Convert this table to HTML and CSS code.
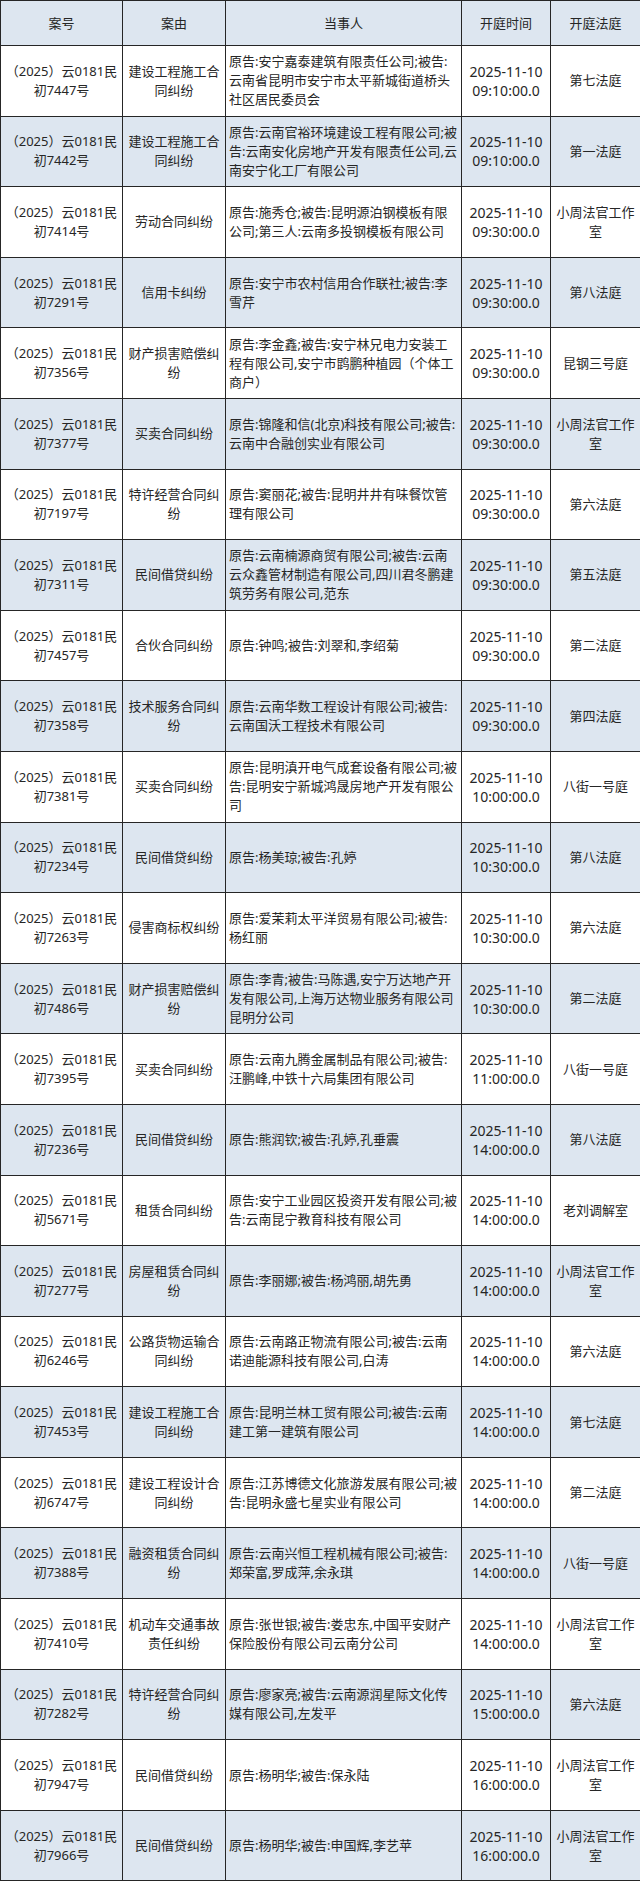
FILE: index.html
```html
<!DOCTYPE html>
<html lang="zh-CN">
<head>
<meta charset="utf-8">
<title>开庭公告</title>
<link rel="stylesheet" href="styles.css">
</head>
<body>
<table class="schedule">
  <colgroup>
    <col class="c-no"><col class="c-cause"><col class="c-party"><col class="c-time"><col class="c-room">
  </colgroup>
  <thead>
    <tr><th>案号</th><th>案由</th><th>当事人</th><th>开庭时间</th><th>开庭法庭</th></tr>
  </thead>
  <tbody>
    <tr><td>（2025）云0181民初7447号</td><td>建设工程施工合同纠纷</td><td class="party">原告:安宁嘉泰建筑有限责任公司;被告:<br>云南省昆明市安宁市太平新城街道桥头<br>社区居民委员会</td><td class="time">2025-11-10 09:10:00.0</td><td>第七法庭</td></tr>
    <tr><td>（2025）云0181民初7442号</td><td>建设工程施工合同纠纷</td><td class="party">原告:云南官裕环境建设工程有限公司;被<br>告:云南安化房地产开发有限责任公司,云<br>南安宁化工厂有限公司</td><td class="time">2025-11-10 09:10:00.0</td><td>第一法庭</td></tr>
    <tr><td>（2025）云0181民初7414号</td><td>劳动合同纠纷</td><td class="party">原告:施秀仓;被告:昆明源泊钢模板有限<br>公司;第三人:云南多投钢模板有限公司</td><td class="time">2025-11-10 09:30:00.0</td><td>小周法官工作室</td></tr>
    <tr><td>（2025）云0181民初7291号</td><td>信用卡纠纷</td><td class="party">原告:安宁市农村信用合作联社;被告:李<br>雪芹</td><td class="time">2025-11-10 09:30:00.0</td><td>第八法庭</td></tr>
    <tr><td>（2025）云0181民初7356号</td><td>财产损害赔偿纠纷</td><td class="party">原告:李金鑫;被告:安宁林兄电力安装工<br>程有限公司,安宁市鹍鹏种植园（个体工<br>商户）</td><td class="time">2025-11-10 09:30:00.0</td><td>昆钢三号庭</td></tr>
    <tr><td>（2025）云0181民初7377号</td><td>买卖合同纠纷</td><td class="party">原告:锦隆和信(北京)科技有限公司;被告:<br>云南中合融创实业有限公司</td><td class="time">2025-11-10 09:30:00.0</td><td>小周法官工作室</td></tr>
    <tr><td>（2025）云0181民初7197号</td><td>特许经营合同纠纷</td><td class="party">原告:窦丽花;被告:昆明井井有味餐饮管<br>理有限公司</td><td class="time">2025-11-10 09:30:00.0</td><td>第六法庭</td></tr>
    <tr><td>（2025）云0181民初7311号</td><td>民间借贷纠纷</td><td class="party">原告:云南楠源商贸有限公司;被告:云南<br>云众鑫管材制造有限公司,四川君冬鹏建<br>筑劳务有限公司,范东</td><td class="time">2025-11-10 09:30:00.0</td><td>第五法庭</td></tr>
    <tr><td>（2025）云0181民初7457号</td><td>合伙合同纠纷</td><td class="party">原告:钟鸣;被告:刘翠和,李绍菊</td><td class="time">2025-11-10 09:30:00.0</td><td>第二法庭</td></tr>
    <tr><td>（2025）云0181民初7358号</td><td>技术服务合同纠纷</td><td class="party">原告:云南华数工程设计有限公司;被告:<br>云南国沃工程技术有限公司</td><td class="time">2025-11-10 09:30:00.0</td><td>第四法庭</td></tr>
    <tr><td>（2025）云0181民初7381号</td><td>买卖合同纠纷</td><td class="party">原告:昆明滇开电气成套设备有限公司;被<br>告:昆明安宁新城鸿晟房地产开发有限公<br>司</td><td class="time">2025-11-10 10:00:00.0</td><td>八街一号庭</td></tr>
    <tr><td>（2025）云0181民初7234号</td><td>民间借贷纠纷</td><td class="party">原告:杨美琼;被告:孔婷</td><td class="time">2025-11-10 10:30:00.0</td><td>第八法庭</td></tr>
    <tr><td>（2025）云0181民初7263号</td><td>侵害商标权纠纷</td><td class="party">原告:爱茉莉太平洋贸易有限公司;被告:<br>杨红丽</td><td class="time">2025-11-10 10:30:00.0</td><td>第六法庭</td></tr>
    <tr><td>（2025）云0181民初7486号</td><td>财产损害赔偿纠纷</td><td class="party">原告:李青;被告:马陈遇,安宁万达地产开<br>发有限公司,上海万达物业服务有限公司<br>昆明分公司</td><td class="time">2025-11-10 10:30:00.0</td><td>第二法庭</td></tr>
    <tr><td>（2025）云0181民初7395号</td><td>买卖合同纠纷</td><td class="party">原告:云南九腾金属制品有限公司;被告:<br>汪鹏峰,中铁十六局集团有限公司</td><td class="time">2025-11-10 11:00:00.0</td><td>八街一号庭</td></tr>
    <tr><td>（2025）云0181民初7236号</td><td>民间借贷纠纷</td><td class="party">原告:熊润钦;被告:孔婷,孔垂震</td><td class="time">2025-11-10 14:00:00.0</td><td>第八法庭</td></tr>
    <tr><td>（2025）云0181民初5671号</td><td>租赁合同纠纷</td><td class="party">原告:安宁工业园区投资开发有限公司;被<br>告:云南昆宁教育科技有限公司</td><td class="time">2025-11-10 14:00:00.0</td><td>老刘调解室</td></tr>
    <tr><td>（2025）云0181民初7277号</td><td>房屋租赁合同纠纷</td><td class="party">原告:李丽娜;被告:杨鸿丽,胡先勇</td><td class="time">2025-11-10 14:00:00.0</td><td>小周法官工作室</td></tr>
    <tr><td>（2025）云0181民初6246号</td><td>公路货物运输合同纠纷</td><td class="party">原告:云南路正物流有限公司;被告:云南<br>诺迪能源科技有限公司,白涛</td><td class="time">2025-11-10 14:00:00.0</td><td>第六法庭</td></tr>
    <tr><td>（2025）云0181民初7453号</td><td>建设工程施工合同纠纷</td><td class="party">原告:昆明兰林工贸有限公司;被告:云南<br>建工第一建筑有限公司</td><td class="time">2025-11-10 14:00:00.0</td><td>第七法庭</td></tr>
    <tr><td>（2025）云0181民初6747号</td><td>建设工程设计合同纠纷</td><td class="party">原告:江苏博德文化旅游发展有限公司;被<br>告:昆明永盛七星实业有限公司</td><td class="time">2025-11-10 14:00:00.0</td><td>第二法庭</td></tr>
    <tr><td>（2025）云0181民初7388号</td><td>融资租赁合同纠纷</td><td class="party">原告:云南兴恒工程机械有限公司;被告:<br>郑荣富,罗成萍,余永琪</td><td class="time">2025-11-10 14:00:00.0</td><td>八街一号庭</td></tr>
    <tr><td>（2025）云0181民初7410号</td><td>机动车交通事故责任纠纷</td><td class="party">原告:张世银;被告:娄忠东,中国平安财产<br>保险股份有限公司云南分公司</td><td class="time">2025-11-10 14:00:00.0</td><td>小周法官工作室</td></tr>
    <tr><td>（2025）云0181民初7282号</td><td>特许经营合同纠纷</td><td class="party">原告:廖家亮;被告:云南源润星际文化传<br>媒有限公司,左发平</td><td class="time">2025-11-10 15:00:00.0</td><td>第六法庭</td></tr>
    <tr><td>（2025）云0181民初7947号</td><td>民间借贷纠纷</td><td class="party">原告:杨明华;被告:保永陆</td><td class="time">2025-11-10 16:00:00.0</td><td>小周法官工作室</td></tr>
    <tr><td>（2025）云0181民初7966号</td><td>民间借贷纠纷</td><td class="party">原告:杨明华;被告:申国辉,李艺苹</td><td class="time">2025-11-10 16:00:00.0</td><td>小周法官工作室</td></tr>
  </tbody>
</table>
</body>
</html>
```

FILE: styles.css
```css
html, body {
  margin: 0;
  padding: 0;
  background: #ffffff;
}

.schedule {
  width: 640px;
  table-layout: fixed;
  border-collapse: collapse;
  font-family: "Noto Sans", "Noto Sans CJK SC", sans-serif;
  font-size: 13px;
  line-height: 19px;
  color: #262626;
}

.c-no { width: 122px; }
.c-cause { width: 103px; }
.c-party { width: 236px; }
.c-time { width: 89px; }
.c-room { width: 90px; }

.schedule th,
.schedule td {
  border: 1px solid #262626;
  padding: 0 4px;
  text-align: center;
  vertical-align: middle;
  font-weight: normal;
}

.schedule thead tr {
  height: 45px;
  background: #dde6f0;
}

.schedule tbody tr {
  height: 70.6px;
}

.schedule tbody tr:nth-child(even) {
  background: #dde6f0;
}

.schedule td.party {
  text-align: left;
  padding: 0 2px 0 3px;
}

.schedule td.time {
  padding: 0 1px;
  font-size: 14px;
}
```
